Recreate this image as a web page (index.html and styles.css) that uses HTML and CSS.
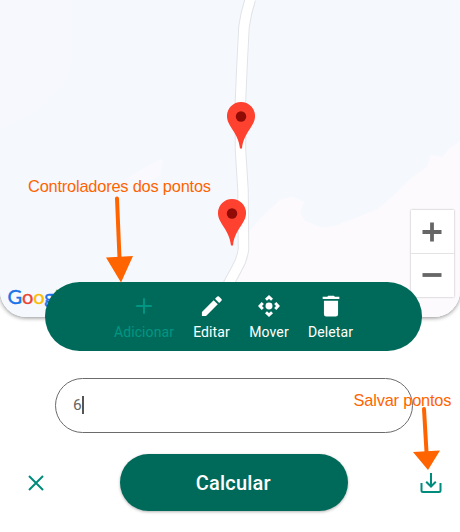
FILE: index.html
```
<!DOCTYPE html>
<html lang="pt-BR">
<head>
<meta charset="utf-8">
<title>Pontos</title>
<link rel="stylesheet" href="styles.css">
</head>
<body>
<main class="screen">
  <section class="map">
    <svg class="terrain" viewBox="0 0 460 317" preserveAspectRatio="none">
      <rect width="460" height="317" fill="#f5f9fe"/>
      <path d="M0 0H72V55Q68 82 50 99L30 117 0 128Z" fill="#f7f8fe"/>
      <path d="M460 141 448 150 443 157 431 155 427 167 413 177 403 186 392 197 378 209 358 217 338 225 322 228 305 221 300 213 304 202 292 197 280 200 262 217 248 233V252L228 286V317H460Z" fill="#fdfafe"/>
      <path d="M126 179 139 171 151 164 163 158 160 176 148 182Z" fill="#f9f9fe"/>
      <path class="road-edge" d="M250.500 -1Q246 12 244 27Q242 62 240.500 100V150L243 190 243.500 249Q242 260 237 268L228 285"/>
      <path class="road" d="M250.500 -1Q246 12 244 27Q242 62 240.500 100V150L243 190 243.500 249Q242 260 237 268L228 285"/>
    </svg>
    <svg class="pin pin-north" viewBox="0 0 28 47"><path d="M14 0a14 14 0 0 1 14 14.500C28 24 16.500 31 15 46.500h-2C11.500 31 0 24 0 14.500A14 14 0 0 1 14 0Z" fill="#ff4130"/><circle cx="14" cy="14.500" r="5.200" fill="#900a06"/></svg>
    <svg class="pin pin-south" viewBox="0 0 28 47"><path d="M14 0a14 14 0 0 1 14 14.500C28 24 16.500 31 15 46.500h-2C11.500 31 0 24 0 14.500A14 14 0 0 1 14 0Z" fill="#ff4130"/><circle cx="14" cy="14.500" r="5.200" fill="#900a06"/></svg>
    <div class="brand"><span class="blue">G</span><span class="red">o</span><span class="yellow">o</span><span class="blue">g</span><span class="green">l</span><span class="red">e</span></div>
    <div class="zoom">
      <div class="zoom-key"><svg width="20" height="20" viewBox="0 0 20 20"><path d="M.5 10h19M10 .5v19"/></svg></div>
      <div class="zoom-key"><svg width="20" height="20" viewBox="0 0 20 20"><path d="M.5 10h19"/></svg></div>
    </div>
  </section>

  <nav class="tools">
    <div class="tool muted add"><svg viewBox="0 0 24 24"><path d="M12 3.500v17M3.500 12h17" fill="none" stroke="currentColor" stroke-width="2.100"/></svg><span>Adicionar</span></div>
    <div class="tool edit"><svg viewBox="0 0 24 24"><path d="M1 18.500V23h4.500L18.300 10.200l-4.500-4.500ZM22.300 6.200a1.300 1.300 0 0 0 0-1.800l-2.700-2.700a1.300 1.300 0 0 0-1.800 0L15.300 4.200l4.500 4.500Z"/></svg><span>Editar</span></div>
    <div class="tool move"><svg viewBox="0 0 24 24"><circle cx="12" cy="12" r="3.800"/><g fill="none" stroke="currentColor" stroke-width="3.200"><path d="m8.700 5.200 3.300-3 3.300 3M8.700 18.800l3.300 3 3.300-3M5.200 8.700l-3 3.300 3 3.300M18.800 8.700l3 3.300-3 3.300"/></g></svg><span>Mover</span></div>
    <div class="tool delete"><svg viewBox="0 0 24 24"><path d="M4.300 6.200h15.400V21a2.500 2.500 0 0 1-2.500 2.500H6.800A2.500 2.500 0 0 1 4.300 21ZM2.900 1.900h5L9 .7h6l1.300 1.200h4.800v2.500H2.900Z"/></svg><span>Deletar</span></div>
  </nav>

  <div class="field"><span>6</span><i class="caret"></i></div>

  <footer class="actions">
    <svg class="close" width="16" height="16" viewBox="0 0 16 16"><path d="m1 1 14 14M15 1 1 15"/></svg>
    <button class="calculate">Calcular</button>
    <svg class="save" width="22" height="22" viewBox="0 0 22 22"><path d="M1.500 11v7.500q0 1.500 1.500 1.500h16q1.500 0 1.500-1.500V11M11 1v13M6.200 9.800l4.800 4.700 4.800-4.700"/></svg>
  </footer>

  <svg class="notes" width="460" height="532" viewBox="0 0 460 532">
    <text x="28" y="192" textLength="183">Controladores dos pontos</text>
    <text x="353.500" y="406" textLength="98">Salvar pontos</text>
    <path class="shaft" d="M117 198.500 119.500 258M424 409l2.500 43"/>
    <path d="m106 257.500 27-1.500-12 26.500ZM413 452l27-1.500L428 470Z"/>
  </svg>
</main>
</body>
</html>
```
FILE: styles.css
```
* { box-sizing: border-box; }
body { margin: 0; background: #fff; font-family: Roboto, sans-serif; }
.screen { position: relative; width: 460px; height: 532px; overflow: hidden; }

.map { position: relative; height: 317px; border-radius: 0 0 26px 26px; box-shadow: 0 1px 4px rgba(0, 0, 0, .45); }
.terrain { display: block; width: 460px; height: 317px; border-radius: 0 0 26px 26px; }
.road-edge { fill: none; stroke: #e1e3e7; stroke-width: 11.500; }
.road { fill: none; stroke: #fff; stroke-width: 9.500; }
.pin { position: absolute; width: 28px; height: 47px; }
.pin-north { left: 227px; top: 102px; }
.pin-south { left: 217.500px; top: 198.500px; }

.brand { position: absolute; left: 7.500px; top: 285px; font: 400 20px/22px Lato, sans-serif; -webkit-text-stroke: .4px; letter-spacing: -.1px; }
.blue { color: #1a73e8; }
.red { color: #ea4335; }
.yellow { color: #fbbc05; }
.green { color: #34a853; }

.zoom { position: absolute; left: 411px; top: 210px; width: 43px; height: 87px; background: #fff; box-shadow: 0 0 2px rgba(0, 0, 0, .3); }
.zoom-key { display: flex; justify-content: center; height: 43px; padding-top: 11.500px; }
.zoom-key svg { margin-right: 1px; }
.zoom-key + .zoom-key { height: 44px; padding-top: 10.500px; border-top: 1px solid #e4e4e4; }
.zoom-key path { stroke: #666; stroke-width: 3.800; }

.tools { position: relative; display: flex; justify-content: center; gap: 19px; width: 377px; height: 69px; margin: -35px 0 0 45px; padding-top: 13px; border-radius: 34.500px; background: #006a5a; color: #fff; }
.tool { display: flex; flex-direction: column; align-items: center; font-size: 14px; line-height: 16px; letter-spacing: .1px; }
.tool svg { width: 22px; height: 22px; margin-bottom: 7px; fill: currentColor; }
.muted { color: #009683; }
.add { width: 60px; }
.edit { width: 37px; }
.move { width: 40px; }
.delete { width: 45px; }

.field { display: flex; align-items: center; width: 358px; height: 55px; margin: 27px 0 0 54.500px; padding: 0 0 2px 17.500px; border: 1px solid #6b6b6b; border-radius: 27.500px; color: #666; font-size: 15.500px; }
.caret { width: 2px; height: 18px; background: #555; }

.actions { display: flex; align-items: center; justify-content: space-between; height: 57px; margin-top: 21px; padding: 0 18.500px 0 28px; }
.actions svg { fill: none; stroke: #008c7c; stroke-width: 2; }
.calculate { width: 228px; height: 57px; margin-left: 5px; padding: 0 2px 0 0; border: 0; border-radius: 28.500px; background: #006a5a; color: #fff; font: 500 20px Roboto, sans-serif; letter-spacing: .2px; box-shadow: 0 1px 3px rgba(0, 0, 0, .3); }

.notes { position: absolute; left: 0; top: 0; fill: #ff6400; font: 16.400px "Liberation Sans", sans-serif; pointer-events: none; }
.shaft { stroke: #ff6400; stroke-width: 4; stroke-linecap: round; }
```
